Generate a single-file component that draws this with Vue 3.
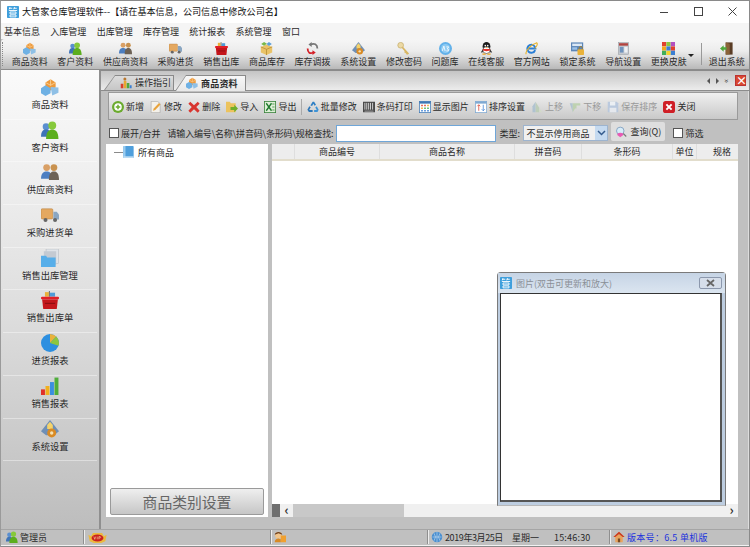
<script setup>
const menus = ['基本信息', '入库管理', '出库管理', '库存管理', '统计报表', '系统管理', '窗口']

const topTools = [
  { label: '商品资料', icon: 'goods' },
  { label: '客户资料', icon: 'customer' },
  { label: '供应商资料', icon: 'supplier' },
  { label: '采购进货', icon: 'truck' },
  { label: '销售出库', icon: 'basket' },
  { label: '商品库存', icon: 'stock' },
  { label: '库存调拨', icon: 'transfer' },
  { label: '系统设置', icon: 'settings' },
  { label: '修改密码', icon: 'key' },
  { label: '问题库', icon: 'bubble' },
  { label: '在线客服', icon: 'qq' },
  { label: '官方网站', icon: 'ie' },
  { label: '锁定系统', icon: 'lock' },
  { label: '导航设置', icon: 'nav' },
  { label: '更换皮肤', icon: 'skin' }
]

const sideItems = [
  { label: '商品资料', icon: 'goods' },
  { label: '客户资料', icon: 'customer' },
  { label: '供应商资料', icon: 'supplier' },
  { label: '采购进货单', icon: 'truck' },
  { label: '销售出库管理', icon: 'folder' },
  { label: '销售出库单', icon: 'basket' },
  { label: '进货报表', icon: 'pie' },
  { label: '销售报表', icon: 'bars' },
  { label: '系统设置', icon: 'settings' }
]

const actions = [
  { label: '新增', icon: 'plus' },
  { label: '修改', icon: 'edit' },
  { label: '删除', icon: 'cross' },
  { label: '导入', icon: 'import' },
  { label: '导出', icon: 'excel', sep: true },
  { label: '批量修改', icon: 'recycle' },
  { label: '条码打印', icon: 'barcode' },
  { label: '显示图片', icon: 'gridimg' },
  { label: '排序设置', icon: 'sort' },
  { label: '上移', icon: 'up', off: true },
  { label: '下移', icon: 'down', off: true },
  { label: '保存排序', icon: 'save', off: true },
  { label: '关闭', icon: 'close' }
]

const columns = [
  { label: '', width: 23 },
  { label: '商品编号', width: 85 },
  { label: '商品名称', width: 135 },
  { label: '拼音码', width: 67 },
  { label: '条形码', width: 91 },
  { label: '单位', width: 24 },
  { label: '规格', width: 41 }
]
</script>

<template>
  <div class="app">
    <svg class="defs" width="0" height="0">
      <defs>
        <symbol id="logo" viewBox="0 0 16 16">
          <rect width="16" height="16" rx="1" fill="#3f9fdc" />
          <path d="M3 3h4M9 3h4M4 1.500 3 4.500M10 1.500 9 4.500M2.500 6h11M4 8h8v2.500H4zM4 12h8v2.500H4z" stroke="#fff" stroke-width="1.200" fill="none" />
        </symbol>
        <symbol id="goods" viewBox="0 0 16 16">
          <path d="M4 4 8.500 1 13 4v4.500L8.500 11 4 8.500z" fill="#ee9a3c" />
          <path d="M8.500 1v5.500L13 4M8.500 6.500 4 4" stroke="#fbd9a5" fill="none" stroke-width="0.700" />
          <path d="M0 9l4-2.500L8.500 9v4.500L4 16l-4-2.500z" fill="#6fb1e4" />
          <path d="M8.500 8l7 .5v4.500L10 15.500z" fill="#8fc0e6" />
        </symbol>
        <symbol id="customer" viewBox="0 0 16 16">
          <circle cx="4.500" cy="5" r="3" fill="#5a8fd0" />
          <path d="M0 14c0-5 2-6.500 4.500-6.500S9 9 9 14z" fill="#3f74b8" />
          <circle cx="10" cy="4" r="3.500" fill="#86c93b" />
          <path d="M4.500 16c0-7 3-8.500 5.500-8.500s5.500 1.500 5.500 8.500z" fill="#5cae1e" />
        </symbol>
        <symbol id="supplier" viewBox="0 0 16 16">
          <circle cx="5" cy="4" r="3" fill="#d9a066" />
          <path d="M0 14c0-5 2.500-6.500 5-6.500S10 9 10 14z" fill="#4d7fc1" />
          <circle cx="11.500" cy="4" r="3" fill="#c9924f" />
          <path d="M7 15c0-6 2-7.500 4.500-7.500S16 9 16 15z" fill="#6d6256" />
        </symbol>
        <symbol id="truck" viewBox="0 0 16 16">
          <rect x="0" y="2.500" width="10.500" height="9" rx="1" fill="#e4a860" stroke="#b98342" stroke-width="0.500" />
          <path d="M11 5h3l2 2.500V12h-5z" fill="#8aa6c2" />
          <circle cx="4" cy="12.500" r="1.800" fill="#666" />
          <circle cx="12.500" cy="12.500" r="1.800" fill="#666" />
        </symbol>
        <symbol id="basket" viewBox="0 0 16 16">
          <rect x="3.500" y="1" width="3.500" height="4" fill="#e9b23b" />
          <rect x="8" y="1.500" width="4.500" height="3.500" fill="#4f9bd8" />
          <path d="M7.500 0v5" stroke="#777" />
          <rect x="0" y="5" width="16" height="2.500" rx="1" fill="#e21f26" />
          <path d="M1 7.500h14L14 16H2z" fill="#c4161c" />
          <path d="M3.500 11h9" stroke="#8c0d12" />
        </symbol>
        <symbol id="stock" viewBox="0 0 16 16">
          <path d="M1 6l7-3 7 3v7l-7 3-7-3z" fill="#e9c268" />
          <path d="M8 9v7M1 6l7 3 7-3" stroke="#b98f35" fill="none" />
          <path d="M5 0l3.500 2L5 4.500 1.500 2.500z" fill="#79b84a" />
          <path d="M11 0l3.500 2.500L11 5 8 2.500z" fill="#5d9fd8" />
        </symbol>
        <symbol id="transfer" viewBox="0 0 16 16">
          <path d="M6 3C10 1 14 3 14 8" stroke="#777" stroke-width="2.200" fill="none" />
          <path d="M7 0v6L3 3z" fill="#777" />
          <path d="M9 13c-4 2-7 0-7-5" stroke="#d42027" stroke-width="2.200" fill="none" />
          <path d="M8 10v6l4-3z" fill="#d42027" />
        </symbol>
        <symbol id="settings" viewBox="0 0 16 16">
          <path d="M8 0l8 10-4.500 3.500h-7L0 10z" fill="#6f8fb6" />
          <path d="M5.500 4.500 8 1.500l2.500 3V8h-5z" fill="#f5d36b" />
          <circle cx="9.500" cy="11.500" r="4" fill="#d98a24" />
          <circle cx="9.500" cy="11.500" r="1.500" fill="#f5e1b3" />
        </symbol>
        <symbol id="key" viewBox="0 0 16 16">
          <circle cx="4.500" cy="4" r="3.500" fill="#ecd9a4" stroke="#c9b173" />
          <path d="M6.500 6.500l7.500 8.500M11 11.500l-1.500 1.500M13 13.500l-1.500 1.500" stroke="#d8b663" stroke-width="2.200" fill="none" />
        </symbol>
        <symbol id="bubble" viewBox="0 0 16 16">
          <circle cx="8" cy="8" r="8" fill="#62b1ea" />
          <circle cx="8" cy="8" r="5.500" fill="#8ecbf3" />
          <path d="M4 11 6 5l1.500 6M9 6h3l-2 2.500q3 0 1.500 2.500H9" stroke="#fff" fill="none" />
        </symbol>
        <symbol id="qq" viewBox="0 0 16 16">
          <ellipse cx="8" cy="5.500" rx="4.800" ry="5.500" fill="#1c1c1c" />
          <ellipse cx="8" cy="10" rx="4.500" ry="4.200" fill="#fff" stroke="#222" stroke-width="0.700" />
          <path d="M3.500 8.500h9v2l-4.500 1-4.500-1z" fill="#e2312b" />
          <path d="M3.500 9 1 13l2.500-.5M12.500 9l2.500 4-2.500-.5" fill="#222" />
          <path d="M3 15h4M9 15h4" stroke="#f0a31f" stroke-width="1.600" />
          <circle cx="6.500" cy="4.500" r="1" fill="#fff" />
          <circle cx="9.500" cy="4.500" r="1" fill="#fff" />
          <path d="M6.500 6.500h3L8 7.800z" fill="#f0a31f" />
        </symbol>
        <symbol id="ie" viewBox="0 0 16 16">
          <path d="M12.500 10a5 5 0 1 1 .3-2H3.500" fill="none" stroke="#2b7fd6" stroke-width="2.400" />
          <path d="M1.500 15C-.5 11 8 3 14.500 1c1.500 2-.5 5-2.500 7" fill="none" stroke="#e8b122" stroke-width="1.300" />
        </symbol>
        <symbol id="lock" viewBox="0 0 16 16">
          <rect x="0" y="0.500" width="15" height="11" fill="#5c86b8" />
          <rect x="1.500" y="2" width="12" height="3" fill="#dbe8f5" />
          <rect x="1.500" y="6.500" width="6" height="3" fill="#9ac0e6" />
          <rect x="8" y="9" width="8" height="7" rx="1" fill="#e9b23b" />
          <path d="M10 9V7.500a2 2 0 0 1 4 0V9" stroke="#a77d1e" fill="none" />
        </symbol>
        <symbol id="nav" viewBox="0 0 16 16">
          <rect x="1.500" y="0.500" width="13" height="15" fill="#c5c9cf" stroke="#8c9096" stroke-width="0.500" />
          <rect x="2.500" y="1.500" width="11" height="3" fill="#b2433f" />
          <rect x="3.500" y="6" width="4.500" height="7" fill="#6f93bd" />
          <rect x="9" y="6" width="4" height="7" fill="#eef1f4" />
        </symbol>
        <symbol id="skin" viewBox="0 0 16 16">
          <rect x="0" y="0" width="5.200" height="5.200" fill="#e0402f" />
          <rect x="5.400" y="0" width="5.200" height="5.200" fill="#8cc63f" />
          <rect x="10.800" y="0" width="5.200" height="5.200" fill="#b24fc1" />
          <rect x="0" y="5.400" width="5.200" height="5.200" fill="#f2a51f" />
          <rect x="5.400" y="5.400" width="5.200" height="5.200" fill="#3b7fd4" />
          <rect x="10.800" y="5.400" width="5.200" height="5.200" fill="#e0402f" />
          <rect x="0" y="10.800" width="5.200" height="5.200" fill="#3fae5a" />
          <rect x="5.400" y="10.800" width="5.200" height="5.200" fill="#f3d32c" />
          <rect x="10.800" y="10.800" width="5.200" height="5.200" fill="#3b7fd4" />
        </symbol>
        <symbol id="door" viewBox="0 0 16 16">
          <rect x="7" y="0.500" width="8.500" height="15" fill="#5a3d25" />
          <path d="M7 .5l5 1.500v13l-5 .5z" fill="#8a6238" />
          <path d="M0 8l4.500-4v2.500H8v3H4.500V12z" fill="#4fa83d" />
        </symbol>
        <symbol id="folder" viewBox="0 0 16 16">
          <rect x="4.500" y="0" width="11" height="13" fill="#dfe3e8" stroke="#b5bac1" stroke-width="0.500" />
          <rect x="2.500" y="2" width="11" height="12" fill="#c4cad2" />
          <path d="M0 6h4.500l1 1.500H13V16H0z" fill="#57aee9" />
        </symbol>
        <symbol id="pie" viewBox="0 0 16 16">
          <circle cx="8" cy="8" r="8" fill="#2c8fe0" />
          <path d="M8 8V0a8 8 0 0 1 5.600 2.300z" fill="#e9b23b" />
          <path d="M8 8l5.600-5.700a8 8 0 0 1 1.900 8.200z" fill="#8cc63f" />
        </symbol>
        <symbol id="bars" viewBox="0 0 16 16">
          <rect x="0" y="11" width="3.500" height="5" fill="#e0302a" />
          <rect x="4" y="8" width="3.500" height="8" fill="#f2b01f" />
          <rect x="8" y="4.500" width="3.500" height="11.500" fill="#3b8fe0" />
          <rect x="12" y="0.500" width="3.500" height="15.500" fill="#4fae3a" />
        </symbol>
        <symbol id="plus" viewBox="0 0 16 16">
          <circle cx="8" cy="8" r="8" fill="#6bab2e" />
          <circle cx="8" cy="8" r="5" fill="#fff" />
          <path d="M8 5v6M5 8h6" stroke="#6bab2e" stroke-width="2" />
        </symbol>
        <symbol id="edit" viewBox="0 0 16 16">
          <path d="M1.500 .5h8.500l3.500 3v12h-12z" fill="#f4f1ea" stroke="#999" stroke-width="0.700" />
          <path d="M4 13l1-3 7-7.500 2 2-7 7.500z" fill="#e8a33c" />
        </symbol>
        <symbol id="cross" viewBox="0 0 16 16">
          <path d="M3 1l5 4.500L13 1l2.500 2.500L11 8l4.500 5-2.500 2.500L8 11l-5 4.500L.5 13 5 8 .5 3.500z" fill="#d8352f" />
        </symbol>
        <symbol id="import" viewBox="0 0 16 16">
          <path d="M0 1h5l1.500 2H13v12H0z" fill="#ecc35d" />
          <path d="M6 8h5V5l5 5-5 5v-3H6z" fill="#6eae2a" />
        </symbol>
        <symbol id="excel" viewBox="0 0 16 16">
          <rect x="0.500" y="0.500" width="15" height="15" fill="#dff0d8" stroke="#2f7d32" />
          <path d="M3 3l7 10M10 3l-7 10" stroke="#1f7a2d" stroke-width="1.800" />
          <path d="M11 4h3M11 8h3M11 12h3" stroke="#2f7d32" />
        </symbol>
        <symbol id="recycle" viewBox="0 0 16 16">
          <path d="M4.500 6 7.500 1h2l2.500 4-2 1.200L8.500 3.500 6.800 6.500z" fill="#2f7fc4" />
          <path d="M13 7l2.500 4.500-1.500 3H9.500v-2.500H13l-2-3.500z" fill="#3d93d6" />
          <path d="M7.500 14.500H2.500L.5 11.500 3 7l2 1.200L3 11.500l1 .5h3.500z" fill="#2c76b8" />
        </symbol>
        <symbol id="barcode" viewBox="0 0 16 16">
          <rect x="0" y="1" width="16" height="14" fill="#4a4a4a" />
          <path d="M2.500 2.500v9M5 2.500v9M7.500 2.500v9M10 2.500v9M12.800 2.500v9" stroke="#e8e8e8" stroke-width="1.100" />
          <path d="M2 13.500h12" stroke="#bbb" />
        </symbol>
        <symbol id="gridimg" viewBox="0 0 16 16">
          <rect x="0.500" y="0.500" width="15" height="15" fill="#fff" stroke="#3f78b5" />
          <rect x="0.500" y="0.500" width="15" height="3" fill="#3f78b5" />
          <path d="M3 5h2v2H3zM7 5h2v2H7z" fill="#e0402f" />
          <path d="M11 5h2v2h-2zM3 8.500h2v2H3z" fill="#f2a51f" />
          <path d="M7 8.500h2v2H7zM11 8.500h2v2h-2z" fill="#3fae5a" />
          <path d="M3 12h2v2H3zM7 12h2v2H7zM11 12h2v2h-2z" fill="#3b7fd4" />
        </symbol>
        <symbol id="sort" viewBox="0 0 16 16">
          <rect x="0.500" y="0.500" width="15" height="15" fill="#fff" stroke="#7fa9d2" />
          <rect x="0.500" y="0.500" width="15" height="3" fill="#7fa9d2" />
          <path d="M5 5v8M3 7l2-2 2 2" stroke="#d8402f" fill="none" />
          <path d="M11 5v8M9 11l2 2 2-2" stroke="#3b7fd4" fill="none" />
        </symbol>
        <symbol id="up" viewBox="0 0 16 16">
          <path d="M6 1l5 8v6H6z" fill="#b9ccb4" />
          <path d="M2 15V7l4-6v14z" fill="#a9bfd0" />
          <path d="M11 15h4l-4-6z" fill="#d2dcc8" />
        </symbol>
        <symbol id="down" viewBox="0 0 16 16">
          <path d="M5 15 1 3h4z" fill="#a9bfd0" />
          <path d="M5 3h10v3H10v4H8l-3 5z" fill="#b9d0a9" />
        </symbol>
        <symbol id="save" viewBox="0 0 16 16">
          <path d="M1 1h12l2 2v12H1z" fill="#b5c6de" />
          <rect x="4" y="1" width="7" height="5" fill="#eef2f7" />
          <rect x="3.500" y="9" width="9" height="6" fill="#e8ecf2" />
        </symbol>
        <symbol id="close" viewBox="0 0 16 16">
          <rect x="0" y="0" width="16" height="16" rx="3.500" fill="#cf1f26" />
          <path d="M4.500 4.500l7 7M11.500 4.500l-7 7" stroke="#fff" stroke-width="2.600" />
        </symbol>
        <symbol id="chart" viewBox="0 0 16 16">
          <rect x="1" y="9" width="3.500" height="6" fill="#d8402f" />
          <rect x="5" y="5" width="3.500" height="10" fill="#e9a72f" />
          <rect x="9" y="8" width="3.500" height="7" fill="#4fa83d" />
          <rect x="13" y="11" width="2.500" height="4" fill="#3b7fd4" />
          <circle cx="6.500" cy="2.500" r="2" fill="#b9772e" />
        </symbol>
        <symbol id="search" viewBox="0 0 16 16">
          <circle cx="7" cy="6.500" r="5" fill="#d8ecf8" stroke="#7f9fc0" stroke-width="1.200" />
          <path d="M3 12a4 3 0 0 1 8 0l-4 3z" fill="#e85bb4" />
          <path d="M11 10l4 4" stroke="#777" stroke-width="1.500" />
        </symbol>
        <symbol id="vip" viewBox="0 0 20 12">
          <path d="M0 3l3 1.500L5 1h10l2 3.500L20 3l-1.500 7L14 12H6l-4.500-2z" fill="#ecb93f" />
          <ellipse cx="10" cy="6.500" rx="6.500" ry="3.800" fill="#c9201f" />
          <path d="M6 5l1 3 1-3M9.700 5v3M11.500 8V5h1.500q1 .8 0 1.500h-1.500" stroke="#ffe9a8" stroke-width="0.600" fill="none" />
        </symbol>
        <symbol id="person" viewBox="0 0 16 16">
          <circle cx="6" cy="5.500" r="4.500" fill="#f2c58b" />
          <path d="M1 5C1.500 0 10.500 0 11 5L6 3z" fill="#6b4022" />
          <rect x="9" y="6" width="7" height="9" fill="#f0a030" />
          <path d="M1 15c0-4 3-5 5-5l3 1v4z" fill="#d98a24" />
        </symbol>
        <symbol id="globe" viewBox="0 0 16 16">
          <circle cx="8" cy="8" r="7" fill="#4a8fd0" />
          <path d="M2 8h12M8 1v14M4 3q4 5 0 10M12 3q-4 5 0 10" stroke="#d8e8f5" stroke-width="0.700" fill="none" />
        </symbol>
        <symbol id="house" viewBox="0 0 16 16">
          <path d="M8 1 0.500 8H3v7h10V8h2.500z" fill="#e9a35c" />
          <path d="M8 1 0.500 8H3l5-4 5 4h2.500z" fill="#c93a22" />
          <rect x="6.500" y="10" width="3" height="5" fill="#7a4a20" />
        </symbol>
        <symbol id="treeitem" viewBox="0 0 12 14">
          <rect width="12" height="14" rx="1" fill="#4f9fdc" />
          <rect x="0" y="0" width="2.500" height="14" fill="#9accf0" />
          <rect x="0" y="12" width="12" height="2" fill="#bcdcf4" />
        </symbol>
      </defs>
    </svg>

    <header class="titlebar">
      <svg class="logo"><use href="#logo" /></svg>
      <span class="title">大管家仓库管理软件--【请在基本信息，公司信息中修改公司名】</span>
      <div class="win-btns">
        <svg width="12" height="12" viewBox="0 0 12 12"><path d="M1 6.500h8" stroke="#444" /></svg>
        <svg width="12" height="12" viewBox="0 0 12 12"><rect x="1.500" y="1.500" width="8" height="8" fill="none" stroke="#444" /></svg>
        <svg width="12" height="12" viewBox="0 0 12 12"><path d="M1.500 1.500l8 8M9.500 1.500l-8 8" stroke="#444" /></svg>
      </div>
    </header>

    <nav class="menubar">
      <span v-for="m in menus" :key="m">{{ m }}</span>
    </nav>

    <div class="toolbar">
      <i class="grip"></i>
      <div v-for="t in topTools" :key="t.label" class="tool">
        <svg><use :href="'#' + t.icon" /></svg>
        <span>{{ t.label }}</span>
      </div>
      <i class="drop"></i>
      <i class="tool-sep"></i>
      <div class="tool">
        <svg><use href="#door" /></svg>
        <span>退出系统</span>
      </div>
    </div>

    <div class="main">
      <aside class="sidebar">
        <div v-for="s in sideItems" :key="s.label" class="side-item">
          <svg><use :href="'#' + s.icon" /></svg>
          <span>{{ s.label }}</span>
        </div>
      </aside>

      <section class="workspace">
        <div class="tabstrip">
          <div class="tab">
            <svg><use href="#chart" /></svg>
            <span>操作指引</span>
          </div>
          <div class="tab active">
            <svg><use href="#goods" /></svg>
            <span>商品资料</span>
          </div>
          <div class="tab-ctrl">
            <i class="tri-l"></i>
            <i class="tri-r"></i>
            <span class="more">»</span>
            <span class="tab-x">×</span>
          </div>
        </div>

        <div class="content">
          <div class="actions">
            <template v-for="a in actions" :key="a.label">
              <div class="action" :class="{ off: a.off }">
                <svg><use :href="'#' + a.icon" /></svg>
                <span>{{ a.label }}</span>
              </div>
              <i v-if="a.sep" class="action-sep"></i>
            </template>
          </div>

          <div class="searchrow">
            <label class="check"><i></i>展开/合并</label>
            <span class="hint">请输入编号\名称\拼音码\条形码\规格查找:</span>
            <div class="input"></div>
            <span class="type-label">类型:</span>
            <div class="select">
              <span>不显示停用商品</span>
              <b><svg width="9" height="6" viewBox="0 0 9 6"><path d="M1 1l3.500 3.500L8 1" stroke="#335a8c" stroke-width="1.500" fill="none" /></svg></b>
            </div>
            <div class="query">
              <svg><use href="#search" /></svg>
              <span>查询(Q)</span>
            </div>
            <label class="check filter"><i></i>筛选</label>
          </div>

          <div class="panes">
            <div class="tree">
              <div class="tree-root">
                <i class="dash"></i>
                <svg><use href="#treeitem" /></svg>
                <span>所有商品</span>
              </div>
              <button class="cat-btn">商品类别设置</button>
            </div>

            <div class="grid">
              <div class="grid-head">
                <div v-for="(c, i) in columns" :key="i" class="cell" :style="{ width: c.width + 'px' }">{{ c.label }}</div>
              </div>
              <div class="grid-body"></div>
              <div class="hscroll">
                <i class="corner"></i>
                <span class="arrow">‹</span>
                <i class="thumb"></i>
                <i class="track"></i>
                <span class="arrow">›</span>
              </div>
            </div>
          </div>
        </div>
      </section>
    </div>

    <footer class="statusbar">
      <div class="seg seg-user">
        <svg><use href="#customer" /></svg>
        <span>管理员</span>
      </div>
      <div class="seg seg-vip">
        <svg class="vip"><use href="#vip" /></svg>
      </div>
      <div class="seg seg-person">
        <svg><use href="#person" /></svg>
      </div>
      <div class="seg seg-time">
        <svg><use href="#globe" /></svg>
        <span class="date">2019年3月25日</span>
        <span class="week">星期一</span>
        <span class="clock">15:46:30</span>
      </div>
      <div class="seg seg-ver">
        <svg><use href="#house" /></svg>
        <span>版本号：6.5 单机版</span>
      </div>
    </footer>

    <div class="float-win">
      <div class="float-title">
        <svg><use href="#logo" /></svg>
        <span>图片(双击可更新和放大)</span>
        <b class="float-close">
          <svg width="9" height="8" viewBox="0 0 9 8"><path d="M1 1l7 6M8 1 1 7" stroke="#666" stroke-width="1.800" /></svg>
        </b>
      </div>
      <div class="float-body"></div>
    </div>
  </div>
</template>

<style scoped>
.app {
  position: relative;
  width: 750px;
  height: 547px;
  box-sizing: border-box;
  border: 1px solid #8a8a8a;
  border-left-color: #9a9a9a;
  display: flex;
  flex-direction: column;
  overflow: hidden;
  background: #c2c2c2;
  font-family: "Noto Sans CJK SC", "Noto Sans", sans-serif;
  font-size: 9px;
  color: #2a2a2a;
  line-height: 1;
}

.defs {
  position: absolute;
}

.titlebar {
  height: 22px;
  flex: none;
  background: #fff;
  display: flex;
  align-items: center;
  padding-left: 6px;
}

.logo {
  width: 12px;
  height: 12px;
  margin-right: 3px;
}

.title {
  font-size: 9.100px;
  color: #111;
}

.win-btns {
  margin-left: auto;
  display: flex;
  gap: 22px;
  padding-right: 10px;
}

.menubar {
  height: 16px;
  flex: none;
  background: #f5f5f5;
  display: flex;
  align-items: center;
  padding-left: 3px;
  gap: 10.300px;
  box-sizing: border-box;
}

.toolbar {
  height: 31px;
  flex: none;
  box-sizing: border-box;
  display: flex;
  align-items: stretch;
  gap: 9.650px;
  background: linear-gradient(#f6f6f6, #ececec 40%, #b9b9b9);
  border-bottom: 1px solid #8c8c8c;
  border-top-left-radius: 4px;
}

.grip {
  width: 1px;
  margin: 3px -2px 3px 1px;
  border-left: 1px dotted #888;
}

.tool {
  display: flex;
  flex-direction: column;
  align-items: center;
  padding-top: 3px;
  white-space: nowrap;
}

.tool svg {
  width: 13px;
  height: 13px;
  margin-bottom: 2px;
}

.drop {
  width: 0;
  height: 0;
  margin: 15px 0 0 -8px;
  border: 3px solid transparent;
  border-top-color: #222;
  border-bottom: 0;
}

.tool-sep {
  width: 1px;
  background: #999;
  margin: 4px -3px 4px -3px;
}

.main {
  flex: 1;
  display: flex;
  min-height: 0;
}

.sidebar {
  width: 98px;
  flex: none;
  box-sizing: border-box;
  padding-top: 7px;
  background: linear-gradient(#fafafa, #eeeeee 25%, #dcdcdc 55%, #bdbdbd);
}

.side-item {
  height: 42.700px;
  box-sizing: border-box;
  display: flex;
  flex-direction: column;
  align-items: center;
  border-bottom: 1px solid rgba(255, 255, 255, 0.4);
  margin: 0 2px;
  font-size: 9.300px;
}

.side-item svg {
  width: 18px;
  height: 18px;
  margin: 1px 0 4px;
}

.workspace {
  flex: 1;
  min-width: 0;
  display: flex;
  flex-direction: column;
  border-left: 2px solid #8f8f8f;
  border-top: 1px solid #8a8a8a;
}

.tabstrip {
  height: 20px;
  flex: none;
  display: flex;
  align-items: flex-end;
  padding-left: 3px;
  background: linear-gradient(#c4c4c4, #ececec);
  border-bottom: 1px solid #8c8c8c;
  box-sizing: border-box;
}

.tab {
  position: relative;
  width: 70px;
  height: 15px;
  box-sizing: border-box;
  display: flex;
  align-items: center;
  gap: 3px;
  padding-left: 16px;
  background: #8a8a8a;
  clip-path: polygon(0 100%, 11px 0, 100% 0, 100% 100%);
}

.tab::before {
  content: "";
  position: absolute;
  inset: 1px 1px 0 1px;
  background: linear-gradient(#dcdcdc, #c6c6c6);
  clip-path: polygon(0 100%, 10px 0, 100% 0, 100% 100%);
}

.tab svg,
.tab span {
  position: relative;
}

.tab.active {
  width: 71px;
  height: 16px;
  margin-left: 1px;
  margin-bottom: -1px;
  padding-left: 11px;
  font-weight: 700;
  letter-spacing: 0.200px;
}

.tab.active::before {
  background: linear-gradient(#f8f8f8, #e8e8e8);
}

.tab svg {
  width: 12px;
  height: 12px;
}

.tab-ctrl {
  margin-left: auto;
  height: 100%;
  display: flex;
  align-items: center;
  gap: 6px;
  padding-right: 3px;
}

.tri-l,
.tri-r {
  border: 3px solid transparent;
}

.tri-l {
  border-right-color: #555;
  border-left: 0;
}

.tri-r {
  border-left-color: #555;
  border-right: 0;
}

.more {
  font-size: 8px;
  transform: rotate(90deg);
  color: #333;
}

.tab-x {
  width: 11px;
  height: 11px;
  background: #d9482f;
  border: 1px solid #b33;
  box-sizing: border-box;
  color: #fff;
  font-size: 11px;
  line-height: 8px;
  text-align: center;
  font-weight: 700;
}

.content {
  flex: 1;
  min-height: 0;
  display: flex;
  flex-direction: column;
  padding: 1px 10px 12px 5px;
  background: #c0c0c0;
  border-right: 1px solid #dcdcdc;
}

.actions {
  height: 28px;
  flex: none;
  box-sizing: border-box;
  margin-left: 2px;
  padding: 1px 0 0 3px;
  display: flex;
  align-items: center;
  gap: 6.100px;
  border: 1px solid #9a9a9a;
  background: linear-gradient(#f0f0f0, #c9c9c9);
}

.action {
  display: flex;
  align-items: center;
  gap: 2px;
  white-space: nowrap;
}

.action svg {
  width: 12px;
  height: 12px;
}

.action.off {
  color: #8e8e8e;
  opacity: 0.85;
}

.action-sep {
  width: 1px;
  height: 16px;
  background: #aaa;
  margin: 0 -1.500px;
}

.searchrow {
  height: 24px;
  flex: none;
  box-sizing: border-box;
  padding: 2px 0 0 3px;
  display: flex;
  align-items: center;
}

.check {
  display: flex;
  align-items: center;
  gap: 2px;
  white-space: nowrap;
}

.check i {
  background: #fff;
  border: 1px solid #555;
  width: 8px;
  height: 8px;
}

.hint {
  margin-left: 7px;
  white-space: nowrap;
  letter-spacing: -0.170px;
}

.input {
  width: 160px;
  height: 17px;
  box-sizing: border-box;
  margin-left: 3px;
  background: #fff;
  border: 1px solid #6fa6d8;
}

.type-label {
  margin-left: 3px;
  width: 24px;
}

.select {
  width: 85px;
  height: 16px;
  box-sizing: border-box;
  border: 1px solid #9db4cf;
  background: #f0f0f0;
  display: flex;
  align-items: center;
  padding-left: 2px;
  white-space: nowrap;
}

.select span {
  flex: 1;
}

.select b {
  width: 12px;
  height: 14px;
  background: #c5daf0;
  display: flex;
  align-items: center;
  justify-content: center;
}

.query {
  width: 54px;
  height: 19px;
  margin: -3px 0 0 3px;
  box-sizing: border-box;
  display: flex;
  align-items: center;
  gap: 3px;
  padding-left: 4px;
  background: #dedede;
  border-radius: 2px;
  white-space: nowrap;
}

.query svg {
  width: 12px;
  height: 12px;
}

.filter {
  margin-left: 8px;
}

.panes {
  flex: 1;
  min-height: 0;
  display: flex;
  gap: 4px;
}

.tree {
  width: 162px;
  flex: none;
  background: #fff;
  box-sizing: border-box;
  display: flex;
  flex-direction: column;
  padding: 2px 4px;
}

.tree-root {
  display: flex;
  align-items: center;
  height: 12px;
}

.dash {
  width: 9px;
  height: 1px;
  background: #8a8a8a;
  margin-left: 4px;
}

.tree-root svg {
  width: 11px;
  height: 12px;
  margin-right: 4px;
}

.cat-btn {
  margin-top: auto;
  height: 27px;
  width: 154px;
  border: 1px solid #9a9a9a;
  border-radius: 2px;
  background: linear-gradient(#efefef, #c6c6c6);
  font-family: "Noto Sans CJK SC", sans-serif;
  font-size: 14.800px;
  color: #666;
  padding: 0;
}

.grid {
  flex: 1;
  min-width: 0;
  display: flex;
  flex-direction: column;
  background: #fff;
}

.grid-head {
  height: 17px;
  flex: none;
  display: flex;
  background: #ededed;
  border-bottom: 2px solid #e2ddcc;
  box-sizing: border-box;
}

.cell {
  box-sizing: border-box;
  border-right: 1px solid #dedede;
  text-align: center;
  line-height: 15px;
  flex: none;
}

.cell:last-child {
  border-right: 0;
  padding-left: 9px;
}

.grid-body {
  flex: 1;
}

.hscroll {
  height: 13px;
  flex: none;
  display: flex;
  align-items: stretch;
  background: #f0f0f0;
}

.corner {
  width: 8px;
  background: #6f6f6f;
}

.arrow {
  width: 13px;
  text-align: center;
  font-size: 13px;
  line-height: 11px;
  font-weight: 700;
  color: #333;
}

.thumb {
  width: 111px;
  background: #c8c8c8;
}

.track {
  flex: 1;
}

.statusbar {
  height: 17px;
  flex: none;
  box-sizing: border-box;
  display: flex;
  padding: 0 7px 1px 2px;
  gap: 1px;
  background: #c0c0c0;
  border-top: 1px solid #a5a5a5;
  border-bottom: 1px solid #f2f2f2;
}

.seg {
  display: flex;
  align-items: center;
  gap: 2px;
  border-right: 1px solid #8f8f8f;
  box-shadow: 1px 0 0 #eee;
}

.seg svg {
  width: 12px;
  height: 12px;
}

.seg .vip {
  width: 19px;
  height: 11px;
}

.seg-user {
  width: 81px;
  padding-left: 3px;
  box-sizing: border-box;
}

.seg-vip {
  width: 186px;
  padding-left: 3px;
  box-sizing: border-box;
}

.seg-person {
  width: 156px;
  padding-left: 2px;
  box-sizing: border-box;
}

.seg-time {
  width: 181px;
  padding-left: 2px;
  box-sizing: border-box;
}

.date {
  margin-left: 0;
  letter-spacing: -0.400px;
}

.week {
  margin-left: 7px;
}

.clock {
  margin-left: 13px;
  letter-spacing: 0.200px;
}

.seg-ver {
  flex: 1;
  border: 0;
  box-shadow: none;
  padding-left: 2px;
  color: #2233dd;
  letter-spacing: 0.300px;
}

.float-win {
  position: absolute;
  left: 496px;
  top: 271px;
  width: 229px;
  height: 234px;
  box-sizing: border-box;
  border: 1px solid #7a7a7a;
  border-bottom-color: #b8b8b8;
  border-radius: 4px 4px 0 0;
  background: #bdcde0;
  padding: 0 3px 3px 2px;
  display: flex;
  flex-direction: column;
}

.float-title {
  height: 20px;
  flex: none;
  display: flex;
  align-items: center;
  gap: 4px;
  color: #8a8f96;
  background: linear-gradient(#c6d4e5, #dbe5f0);
  margin: 0 -3px 0 -2px;
  padding: 0 3px 0 2px;
}

.float-title > svg {
  width: 12px;
  height: 12px;
}

.float-close {
  margin-left: auto;
  width: 23px;
  height: 12px;
  border: 1px solid #8c98ad;
  border-radius: 2px;
  background: #d6deea;
  box-sizing: border-box;
  display: flex;
  align-items: center;
  justify-content: center;
}

.float-body {
  flex: 1;
  background: #fff;
  border: 1px solid #333;
  border-right: 2px solid #555;
  border-bottom: 2px solid #555;
}
</style>

<style>
html,
body {
  margin: 0;
  padding: 0;
  background: #c2c2c2;
}
</style>
